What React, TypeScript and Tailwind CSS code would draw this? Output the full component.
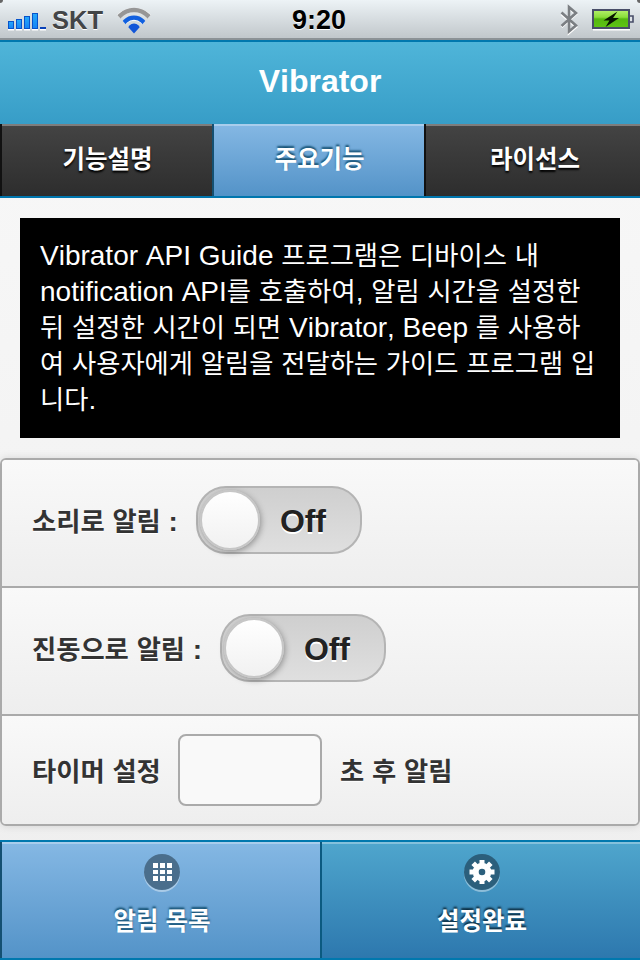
import React from "react";

const sans = "font-['Liberation_Sans','Noto_Sans_CJK_KR',sans-serif]";

// Hangul runs are set slightly smaller than the Latin text and the spaces around them.
function Mixed({ text }: { text: string }) {
  return (
    <>
      {text.split(/([\uac00-\ud7a3]+)/).map((part, i) =>
        i % 2 ? (
          <span key={i} className="text-[0.94em]">{part}</span>
        ) : (
          part
        ),
      )}
    </>
  );
}

function StatusBar() {
  return (
    <div className="relative flex h-10 items-start justify-between bg-linear-to-b from-[#edf3f6] to-[#bfc5c9] shadow-[inset_0_-2px_0_#8c9296]">
      <svg className="h-10 w-[160px]" viewBox="0 0 160 40">
        <defs>
          <linearGradient id="bars" x1="0" y1="0" x2="0" y2="1">
            <stop offset="0" stopColor="#25a9fb" />
            <stop offset="1" stopColor="#1583f5" />
          </linearGradient>
          <clipPath id="fan">
            <path d="M134 33.5 L115.5 13 V0 H152.5 V13Z" />
          </clipPath>
        </defs>
        <path d="M8 29.7h6M16 29.7h6M24 29.7h6M32 29.7h6M40 29.7h6" stroke="#fff" strokeWidth="1.4" />
        <g fill="url(#bars)" stroke="#0753cb" strokeWidth="1">
          <rect x="8.5" y="21.5" width="5" height="7" />
          <rect x="16.5" y="19.5" width="5" height="9" />
          <rect x="24.5" y="16.5" width="5" height="12" />
          <rect x="32.5" y="13.5" width="5" height="15" />
        </g>
        <rect x="40" y="27" width="6" height="2" fill="#0a42b8" />
        <text x="52" y="30" fontSize="26" fontWeight="bold" fontFamily="Liberation Sans" fill="#fff" textLength="51" lengthAdjust="spacingAndGlyphs">SKT</text>
        <text x="52" y="29" fontSize="26" fontWeight="bold" fontFamily="Liberation Sans" fill="#434547" textLength="51" lengthAdjust="spacingAndGlyphs">SKT</text>
        <g clipPath="url(#fan)" fill="none">
          <circle cx="134" cy="31" r="21" stroke="#fff" strokeWidth="4.5" />
          <circle cx="134" cy="31.5" r="13" stroke="#fff" strokeWidth="4.6" />
          <circle cx="134" cy="30" r="20" stroke="#969696" strokeWidth="4.4" />
          <circle cx="134" cy="30" r="12.4" stroke="#1160df" strokeWidth="4.4" />
          <circle cx="134" cy="30" r="6.5" fill="#1256d8" />
        </g>
      </svg>
      <svg className="absolute left-[285px] top-0 h-10 w-[70px]" viewBox="0 0 70 40">
        <text x="7" y="29.5" fontSize="27" fontWeight="bold" fontFamily="Liberation Sans" fill="#fff" textLength="54">9:20</text>
        <text x="7" y="28.5" fontSize="27" fontWeight="bold" fontFamily="Liberation Sans" fill="#000" textLength="54">9:20</text>
      </svg>
      <svg className="h-10 w-[90px]" viewBox="0 0 90 40">
        <defs>
          <linearGradient id="cell" x1="0" y1="0" x2="0" y2="1">
            <stop offset="0" stopColor="#b5f06c" />
            <stop offset="0.4" stopColor="#8ade3a" />
            <stop offset="0.5" stopColor="#55b810" />
            <stop offset="1" stopColor="#5fc414" />
          </linearGradient>
        </defs>
        <path d="M11.5 14 L26 27 L19 33 V8 L26 14 L11.5 27" fill="none" stroke="#fff" strokeWidth="2.6" />
        <path d="M11.5 12.5 L26 25.5 L19 31.5 V7 L26 13 L11.5 26" fill="none" stroke="#7b7f83" strokeWidth="2.6" />
        <path d="M43 29.8h37" stroke="#fff" strokeWidth="1.5" />
        <rect x="43" y="10" width="36" height="18" fill="url(#cell)" stroke="#484d68" strokeWidth="2" />
        <path d="M80 16h3v6h-3" fill="#dfe4e8" stroke="#484d68" strokeWidth="1.6" />
        <path d="M67.5 11.5 L53.5 20.5 H59.5 L55.5 27 L69 18 H63Z" fill="#081400" />
      </svg>
      <span className="absolute left-0 top-0 size-[3px] rounded-br-full bg-[#666]" />
      <span className="absolute right-0 top-0 size-[3px] rounded-bl-full bg-[#666]" />
    </div>
  );
}

function Toggle() {
  return (
    <div className="relative h-[68px] w-[166px] rounded-[30px] border-2 border-[#b4b4b4] bg-linear-to-b from-[#cfcfcf] to-[#dfdfdf]">
      <span className="absolute left-0.5 top-[2px] size-[60px] rounded-full border-2 border-[#c6c6c6] bg-linear-to-b from-white to-[#f1f1f1] shadow-[1px_2px_6px_rgba(0,0,0,0.35)]" />
      <span className="absolute left-[82px] top-px text-[32px] font-bold leading-[64px] tracking-[-0.2px] text-[#222] [text-shadow:0_2px_0_#fff]">Off</span>
    </div>
  );
}

const row = "flex items-center bg-linear-to-b from-[#f9f9f9] to-[#eee] pl-[30px]";
const label = "whitespace-nowrap text-[28px] font-bold leading-9 text-[#333] [text-shadow:0_1px_0_#fff]";

const guide = [
  "Vibrator API Guide 프로그램은 디바이스 내",
  "notification API를 호출하여, 알림 시간을 설정한",
  "뒤 설정한 시간이 되면 Vibrator, Beep 를 사용하",
  "여 사용자에게 알림을 전달하는 가이드 프로그램 입",
  "니다.",
];

export default function App() {
  return (
    <div className={`${sans} flex h-[960px] w-[640px] flex-col overflow-hidden bg-linear-to-b from-[#f9f9f9] to-[#eee] [font-kerning:none]`}>
      <StatusBar />
      <header className="flex h-[84px] items-center justify-center border-t-2 border-[#0078ae] bg-linear-to-b from-[#4fb5d9] to-[#379dc7] pb-1">
        <h1 className="text-[32px] font-bold leading-10 text-white">Vibrator</h1>
      </header>
      <nav className="flex h-[74px] border-b-2 border-[#0076ae] text-[26px] font-bold text-white">
        <div className="flex w-[212px] justify-center border-l-2 border-[#111] bg-linear-to-b from-[#444] to-[#2d2d2d] pt-[17px] pl-px leading-9 [text-shadow:0_2px_2px_#000] shadow-[inset_0_2px_0_#7d7d7d]">
          <span><Mixed text="기능설명" /></span>
        </div>
        <div className="flex w-[212px] justify-center border-l-2 border-[#145072] bg-linear-to-b from-[#85b8e4] to-[#5393c8] pt-[17px] pl-px leading-9 [text-shadow:0_-2px_2px_#145072] shadow-[inset_0_2px_0_#a9cdec]">
          <span><Mixed text="주요기능" /></span>
        </div>
        <div className="flex w-[216px] justify-center border-l-2 border-[#111] bg-linear-to-b from-[#444] to-[#2d2d2d] pt-[17px] pl-1 leading-9 [text-shadow:0_2px_2px_#000] shadow-[inset_0_2px_0_#7d7d7d]">
          <span><Mixed text="라이선스" /></span>
        </div>
      </nav>
      <main className="flex flex-1 flex-col pt-5">
        <div className="mx-5 h-[220px] bg-black p-5 text-[28px] leading-9 whitespace-nowrap text-white">
          {guide.map((line) => (
            <p key={line} className="h-9"><Mixed text={line} /></p>
          ))}
        </div>
        <section className="mt-5 flex h-[368px] flex-col overflow-hidden rounded-md border-2 border-[#aaa] shadow-[0_0_8px_rgba(0,0,0,0.12)]">
          <div className={`${row} h-[128px] border-b-2 border-[#aaa]`}>
            <span className={`${label} -mt-0.5 w-[164px]`}><Mixed text="소리로 알림 :" /></span>
            <div className="-mt-[6px]"><Toggle /></div>
          </div>
          <div className={`${row} h-[128px] border-b-2 border-[#aaa]`}>
            <span className={`${label} -mt-0.5 w-[188px]`}><Mixed text="진동으로 알림 :" /></span>
            <div className="-mt-[6px]"><Toggle /></div>
          </div>
          <div className={`${row} h-[108px]`}>
            <span className={`${label} mt-1 w-[146px]`}><Mixed text="타이머 설정" /></span>
            <input aria-label="타이머" className="h-[72px] w-[144px] rounded-[8px] border-2 border-[#aaa] bg-[#f9f9f9]" />
            <span className={`${label} ml-[18px] mt-1`}><Mixed text="초 후 알림" /></span>
          </div>
        </section>
      </main>
      <footer className="flex h-[120px] border-y-2 border-[#0078ae] text-[26px] font-bold leading-9 text-white">
        <div className="flex w-[320px] flex-col items-center border-l-2 border-[#145072] bg-linear-to-b from-[#85b8e4] to-[#5393c8] pt-3 pl-[2px] shadow-[inset_0_2px_0_#a9cdec] [text-shadow:0_-2px_2px_#145072]">
          <svg className="h-10 w-9" viewBox="0 0 36 40">
            <circle cx="18" cy="20" r="18" fill="#fff" opacity="0.4" />
            <circle cx="18" cy="18" r="18" fill="#4a6e8c" />
            <path d="M9 9h5v5H9zM16 9h5v5h-5zM23 9h5v5h-5zM9 16h5v4H9zM16 16h5v4h-5zM23 16h5v4h-5zM9 22h5v5H9zM16 22h5v5h-5zM23 22h5v5h-5z" fill="#fff" />
          </svg>
          <span className="mt-[9px]"><Mixed text="알림 목록" /></span>
        </div>
        <div className="flex w-[320px] flex-col items-center border-l-2 border-[#0b5a80] bg-linear-to-b from-[#4fa6cd] to-[#2d78ae] pt-3 pl-[2px] shadow-[inset_0_2px_0_#84c1dc] [text-shadow:0_-2px_2px_#0b2a3c]">
          <svg className="h-10 w-9" viewBox="0 0 36 40">
            <circle cx="18" cy="20" r="18" fill="#fff" opacity="0.4" />
            <circle cx="18" cy="18" r="18" fill="#2b5f7c" />
            <circle cx="18" cy="18" r="6.3" fill="none" stroke="#fff" strokeWidth="6" />
            <path d="M18 6v4M18 26v4M5.5 18h4M26.5 18h4M9.2 9.2l3 3M23.8 23.8l3 3M26.8 9.2l-3 3M12.2 23.8l-3 3" stroke="#fff" strokeWidth="5" />
          </svg>
          <span className="mt-[9px]"><Mixed text="설정완료" /></span>
        </div>
      </footer>
    </div>
  );
}
